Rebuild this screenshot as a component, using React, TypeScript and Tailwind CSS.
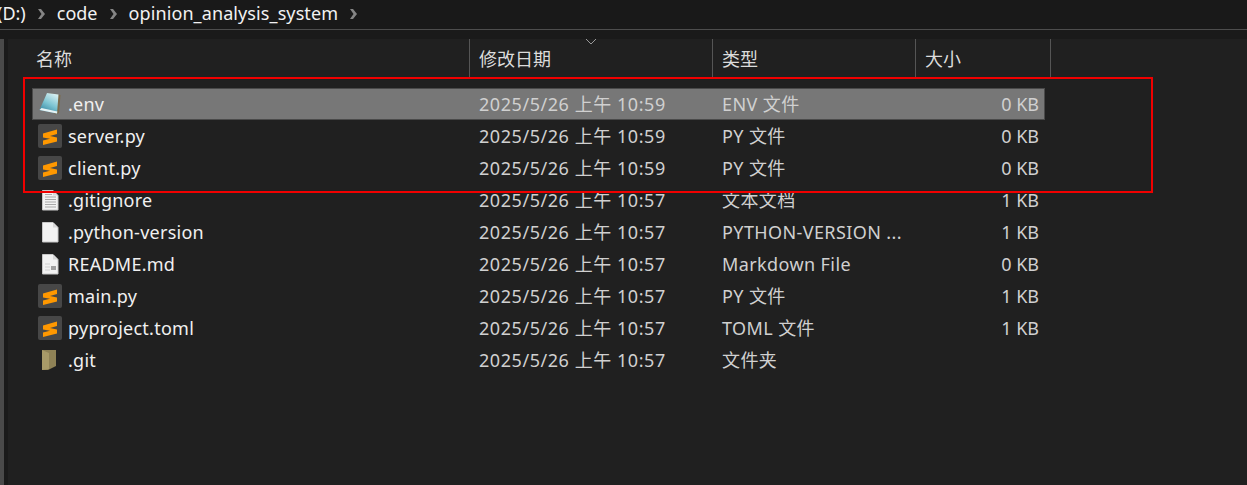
import type { ReactNode } from 'react';

type IconKind = 'env' | 'sublime' | 'text' | 'blank' | 'md' | 'folder';

const files: [IconKind, string, string, string, string][] = [
  ['env', '.env', '2025/5/26 上午 10:59', 'ENV 文件', '0 KB'],
  ['sublime', 'server.py', '2025/5/26 上午 10:59', 'PY 文件', '0 KB'],
  ['sublime', 'client.py', '2025/5/26 上午 10:59', 'PY 文件', '0 KB'],
  ['text', '.gitignore', '2025/5/26 上午 10:57', '文本文档', '1 KB'],
  ['blank', '.python-version', '2025/5/26 上午 10:57', 'PYTHON-VERSION ...', '1 KB'],
  ['md', 'README.md', '2025/5/26 上午 10:57', 'Markdown File', '0 KB'],
  ['sublime', 'main.py', '2025/5/26 上午 10:57', 'PY 文件', '1 KB'],
  ['sublime', 'pyproject.toml', '2025/5/26 上午 10:57', 'TOML 文件', '1 KB'],
  ['folder', '.git', '2025/5/26 上午 10:57', '文件夹', ''],
];

function Chevron() {
  return (
    <svg width="9" height="12" viewBox="0 0 9 12" className="shrink-0">
      <path d="M1 1 L4 1 L8 6 L4 11 L1 11 L4.5 6 Z" fill="#858585" />
    </svg>
  );
}

function Sheet({ children }: { children?: ReactNode }) {
  return (
    <svg width="24" height="24" viewBox="0 0 24 24">
      <path d="M4.5 2.5 H15 L20 7.5 V22 H4.5 Z" fill="#f2f2f2" stroke="#c8c8c8" />
      <path d="M15 2.5 V7.5 H20 Z" fill="#d8d8d8" />
      {children}
    </svg>
  );
}

function FileIcon({ kind }: { kind: IconKind }) {
  if (kind === 'sublime') {
    return (
      <svg width="24" height="24" viewBox="0 0 24 24">
        <rect x="0" y="0" width="24" height="24" rx="2" fill="#474747" />
        <path
          d="M5 9.5 L19 5.5 V10 L12 12 L19 13.5 V17.5 L5 21 V16.5 L12 14.8 L5 13.5 Z"
          fill="#ff9800"
        />
      </svg>
    );
  }
  if (kind === 'env') {
    return (
      <svg width="24" height="24" viewBox="0 0 24 24">
        <defs>
          <linearGradient id="envPad" x1="0.7" y1="0" x2="0.2" y2="1">
            <stop offset="0" stopColor="#d5eef0" />
            <stop offset="0.5" stopColor="#7cc4d2" />
            <stop offset="1" stopColor="#2f7f9c" />
          </linearGradient>
        </defs>
        <path d="M9 1 L22.5 3 L21 21 L17 22.5 Z" fill="#7b6a4c" />
        <path d="M9 1 L20.5 2.5 L19 21.5 L1.5 18 Z" fill="url(#envPad)" />
        <path d="M1.5 18 L19 21.5 L19.3 19.5 L3.5 16 Z" fill="#e6f3f5" />
      </svg>
    );
  }
  if (kind === 'text') {
    return (
      <Sheet>
        <path
          d="M7 6.5 H14 M7 9 H18 M7 11.5 H18 M7 14 H18 M7 16.5 H18 M7 19 H18"
          stroke="#a8a8a8"
          strokeWidth="1"
        />
      </Sheet>
    );
  }
  if (kind === 'md') {
    return (
      <Sheet>
        <path d="M7 12 H12 M7 15 H12 M7 18 H12" stroke="#d0d0d0" strokeWidth="1" />
        <rect x="13" y="14" width="5" height="4" fill="#a0a0a0" />
      </Sheet>
    );
  }
  if (kind === 'folder') {
    return (
      <svg width="24" height="24" viewBox="0 0 24 24">
        <path d="M4 2 H18 V18 L10 22 H4 Z" fill="#8f8256" />
        <path d="M4 2 L11 5 V21 L4 22 Z" fill="#a89a68" />
      </svg>
    );
  }
  return <Sheet />;
}

function Column({ width, label, children }: { width: string; label: string; children?: ReactNode }) {
  return (
    <div className={`relative flex h-[38px] shrink-0 items-center border-r border-[#555555] pl-[9px] pt-[3px] text-[#dcdcdc] ${width}`}>
      {label}
      {children}
    </div>
  );
}

export default function App() {
  return (
    <div className="flex h-[485px] w-[1247px] flex-col overflow-hidden bg-[#1a1a1a] text-[18px] text-[#f0f0f0] [font-family:'Noto_Sans','Noto_Sans_CJK_SC',sans-serif]">
      <div className="flex h-[30px] shrink-0 items-center gap-[11px] border-b border-[#4d4d4d] bg-[#191919] pb-[2px] text-[#f2f2f2]">
        <span className="ml-[-3px]">(D:)</span>
        <Chevron />
        <span>code</span>
        <Chevron />
        <span className="tracking-[0.1px]">opinion_analysis_system</span>
        <Chevron />
      </div>
      <div className="flex min-h-0 flex-1">
        <div className="mt-[9px] w-[4px] shrink-0 bg-[#4a4a4a]" />
        <div className="w-[4px] shrink-0" />
        <div className="mt-[9px] min-w-0 flex-1 bg-[#202020]">
          <div className="flex pl-[19px]">
            <Column width="w-[443px]" label="名称" />
            <Column width="w-[243px]" label="修改日期">
              <svg width="12" height="7" viewBox="0 0 12 7" className="absolute left-[115px] top-[-1px]">
                <path d="M1 1 L6 6 L11 1" fill="none" stroke="#9a9a9a" />
              </svg>
            </Column>
            <Column width="w-[203px]" label="类型" />
            <Column width="w-[135px]" label="大小" />
          </div>
          <div className="mt-[11px] flex flex-col pl-[24px]">
            {files.map(([kind, name, date, type, size], i) => (
              <div
                key={name}
                className={`flex h-[32px] w-[1013px] items-center border ${
                  i === 0 ? 'border-[#4a4a4a] bg-[#777777]' : 'border-transparent'
                }`}
              >
                <div className="flex w-[438px] shrink-0 items-center gap-[6px] pl-[5px]">
                  <FileIcon kind={kind} />
                  <span className="tracking-[0.25px]">{name}</span>
                </div>
                <div className="w-[243px] shrink-0 pl-[8px] tracking-[0.55px] text-[#d0d0d0]">{date}</div>
                <div className="w-[203px] shrink-0 pl-[8px] tracking-[0.4px] text-[#d0d0d0]">{type}</div>
                <div className="flex-1 pr-[5px] text-right text-[#d0d0d0]">{size}</div>
              </div>
            ))}
          </div>
        </div>
      </div>
      {/* annotation drawn on top of the screenshot */}
      <div className="absolute left-[23px] top-[77px] h-[116px] w-[1130px] border-2 border-[#f00000]" />
    </div>
  );
}
